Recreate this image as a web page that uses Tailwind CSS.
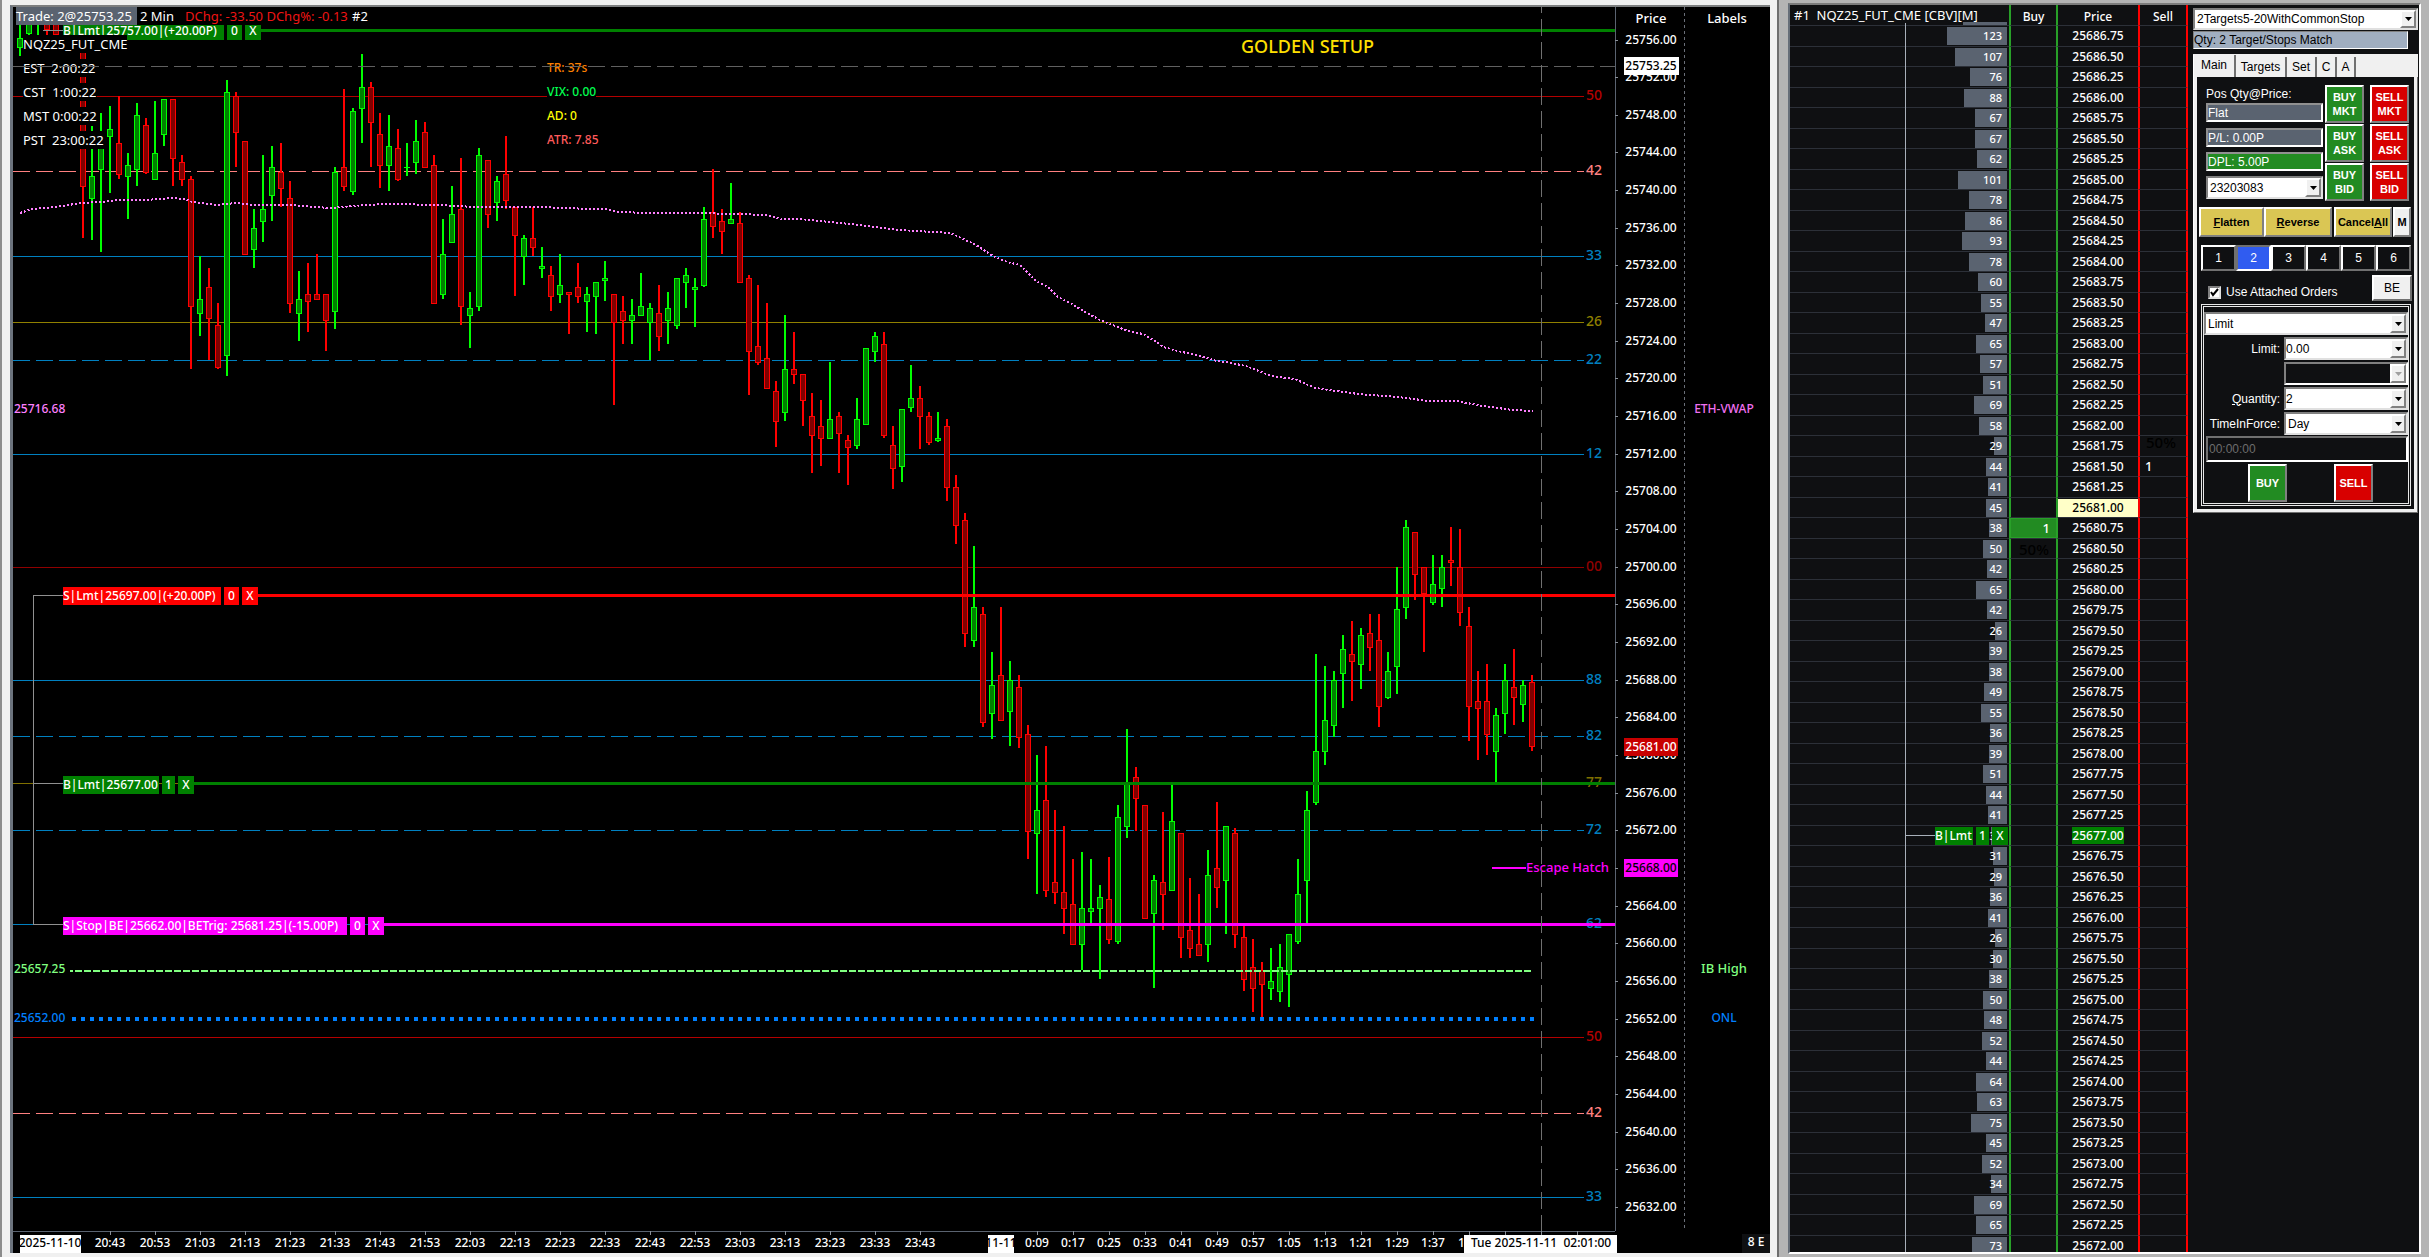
<!DOCTYPE html>
<html lang="en">
<head>
  <meta charset="UTF-8">
  <meta name="viewport" content="width=device-width, initial-scale=1">
  <title>NQZ25_FUT_CME - 2 Min</title>
  <script src="https://cdn.jsdelivr.net/npm/@tailwindcss/browser@4"></script>
</head>
<body class="flex h-screen overflow-hidden bg-[#f0f0f0] font-['Noto_Sans','Open_Sans',sans-serif] text-[13px] leading-[18px] text-white">

  <!-- Chart window -->
  <main class="flex min-w-0 flex-1 border-r-2 border-l-2 border-r-[#6e6e6e] border-l-[#8c8c8c] bg-[#f0f0f0] pt-[5px] pr-[7px] pb-1 pl-2">
    <div id="chart" class="relative min-w-0 flex-1 overflow-hidden border-t-2 border-l-3 border-t-[#7d7f80] border-l-[#6b737d] bg-black">
      <svg id="plot" class="absolute inset-0 h-full w-full font-medium"></svg>

      <!-- Working orders on the chart -->
      <div class="absolute top-[15px] left-[50px] flex gap-[3px] text-[12px] font-medium">
        <span class="w-[161px] bg-[#008000] whitespace-nowrap">B|Lmt|25757.00|(+20.00P)</span>
        <button class="w-[15px] bg-[#008000]">0</button>
        <button class="w-4 bg-[#008000]">X</button>
      </div>
      <div class="absolute top-[580px] left-[50px] flex gap-[3px] text-[12px] font-medium">
        <span class="w-[158px] bg-[#ff0000] whitespace-nowrap">S|Lmt|25697.00|(+20.00P)</span>
        <button class="w-[15px] bg-[#ff0000]">0</button>
        <button class="w-4 bg-[#ff0000]">X</button>
      </div>
      <div class="absolute top-[769px] left-[50px] flex gap-[3px] text-[12px] font-medium">
        <span class="w-24 bg-[#008000] whitespace-nowrap">B|Lmt|25677.00</span>
        <button class="w-[13px] bg-[#008000]">1</button>
        <button class="w-4 bg-[#008000]">X</button>
      </div>
      <div class="absolute top-[910px] left-[50px] flex gap-[3px] text-[12px] font-medium">
        <span class="w-[284px] bg-[#ff00ff] whitespace-nowrap">S|Stop|BE|25662.00|BETrig: 25681.25|(-15.00P)</span>
        <button class="w-[15px] bg-[#ff00ff]">0</button>
        <button class="w-4 bg-[#ff00ff]">X</button>
      </div>

      <!-- Header line -->
      <div class="absolute top-0 left-[3px] flex bg-black whitespace-nowrap">
        <span class="w-[121px] bg-[#5a6370]">Trade: 2@25753.25</span>
        <span class="ml-[3px] w-[45px]">2 Min</span>
        <span class="w-[167px] text-[#f01414]">DChg: -33.50 DChg%: -0.13</span>
        <span>#2</span>
      </div>

      <!-- Clocks -->
      <div class="absolute top-[28px] left-[10px] flex flex-col items-start gap-[6px] whitespace-pre">
        <span class="bg-black">NQZ25_FUT_CME</span>
        <span class="bg-black">EST  2:00:22</span>
        <span class="bg-black">CST  1:00:22</span>
        <span class="bg-black">MST 0:00:22</span>
        <span class="bg-black">PST  23:00:22</span>
      </div>
      <div class="absolute top-[52px] left-[534px] flex flex-col items-start gap-[6px] text-[12px] font-medium">
        <span class="bg-black text-[#ff8000]">TR: 37s</span>
        <span class="bg-black text-[#00ff50]">VIX: 0.00</span>
        <span class="bg-black text-[#ffff00]">AD: 0</span>
        <span class="bg-black text-[#ff5a5a]">ATR: 7.85</span>
      </div>
      <svg id="cross" class="pointer-events-none absolute inset-0 h-full w-full"></svg>
    </div>
  </main>

  <!-- Trading window: price ladder and order entry -->
  <aside class="flex w-[650px] shrink-0 bg-[#b4b4b4] pt-[3px] pr-2 pb-[3px] pl-[9px]">
    <div class="flex min-w-0 flex-1 overflow-hidden border-2 border-t-[#7c7c7c] border-r-white border-b-white border-l-[#666e78] bg-[#0f1012]">
      <div class="relative w-[398px] shrink-0 overflow-hidden">
        <table class="w-[398px] table-fixed border-separate border-spacing-0">
          <thead>
            <tr class="h-5 leading-[16px]">
              <th class="w-[219px] p-0 pl-1 text-left font-normal whitespace-pre">#1  NQZ25_FUT_CME [CBV][M]</th>
              <th class="w-[47px] border-l-2 border-[#28a028] p-0 pt-1 text-[12px] font-medium">Buy</th>
              <th class="w-[82px] border-l-2 border-[#28a028] p-0 pt-1 text-[12px] font-medium">Price</th>
              <th class="w-[50px] border-x-2 border-[#ff0000] p-0 pt-1 text-[12px] font-medium">Sell</th>
            </tr>
          </thead>
          <tbody id="ladder" class="text-[12px] leading-[18px] font-medium"></tbody>
        </table>
        <!-- Divider of the volume column -->
        <div class="absolute top-[18px] bottom-0 left-[115px] w-px bg-[#a8b0ba]"></div>
        <div class="absolute top-[17px] left-[173px] h-[3px] w-11 bg-[#5a6370]"></div>
      </div>

      <form class="ml-[5px] flex w-[225px] shrink-0 flex-col pt-[3px] font-['Liberation_Sans',Arial,sans-serif] text-[12px] leading-[14px]">
        <div class="relative h-[22px]">
          <select aria-label="Trade window config" class="h-full w-full appearance-none border-2 border-t-[#808080] border-r-[#e0e0e0] border-b-[#e0e0e0] border-l-[#808080] bg-white pl-[2px] text-black"><option>2Targets5-20WithCommonStop</option></select>
          <span class="pointer-events-none absolute inset-y-[2px] right-[2px] flex w-4 items-center justify-center border-2 border-t-white border-r-[#808080] border-b-[#808080] border-l-white bg-[#f0f0f0]"><svg class="h-1 w-[7px]" viewBox="0 0 7 4"><path d="M0 0h7L3.5 4z"/></svg></span>
        </div>
        <p class="mt-px h-[18px] w-[215px] border border-t-[#808080] border-r-white border-b-white border-l-[#808080] bg-[#a0aec0] pt-px text-black">Qty: 2 Target/Stops Match</p>

        <div class="mt-[5px] bg-[#f0f0f0]">
          <div class="flex h-[23px] items-end text-black">
            <button type="button" class="h-[22px] w-[43px] border-r-2 border-l border-r-[#707070] border-l-white bg-[#f0f0f0] pb-[2px]">Main</button>
            <button type="button" class="h-5 w-[51px] border-r-2 border-[#707070] bg-[#f0f0f0]">Targets</button>
            <button type="button" class="h-5 w-[30px] border-r-2 border-[#707070] bg-[#f0f0f0]">Set</button>
            <button type="button" class="h-5 w-5 border-r-2 border-[#707070] bg-[#f0f0f0]">C</button>
            <button type="button" class="h-5 w-[19px] border-r-2 border-[#707070] bg-[#f0f0f0]">A</button>
          </div>

          <div class="border border-t-0 border-r-[#707070] border-b-[#707070] border-l-white px-[3px] pb-[3px]">
            <div class="bg-[#0f1012] pb-[3px]">
              <div class="flex pt-2 pl-[9px]">
                <div class="flex w-[117px] flex-col">
                  <label for="pos" class="h-[18px] pt-[2px]">Pos Qty@Price:</label>
                  <input id="pos" value="Flat" readonly class="h-[19px] border-2 border-t-[#909090] border-r-white border-b-white border-l-[#909090] bg-[#5a6370]">
                  <input aria-label="P/L" value="P/L: 0.00P" readonly class="mt-[6px] h-[19px] border-2 border-t-[#909090] border-r-white border-b-white border-l-[#909090] bg-[#5a6370]">
                  <input aria-label="Daily P/L" value="DPL: 5.00P" readonly class="mt-[5px] h-[19px] border-2 border-t-[#909090] border-r-white border-b-white border-l-[#909090] bg-[#228b22]">
                  <div class="relative mt-[5px] h-[23px]">
                    <select aria-label="Trade account" class="h-full w-full appearance-none border-2 border-t-[#808080] border-r-[#e0e0e0] border-b-[#e0e0e0] border-l-[#808080] bg-white pl-[2px] text-black"><option>23203083</option></select>
                    <span class="pointer-events-none absolute inset-y-[2px] right-[2px] flex w-4 items-center justify-center border-2 border-t-white border-r-[#808080] border-b-[#808080] border-l-white bg-[#f0f0f0]"><svg class="h-1 w-[7px]" viewBox="0 0 7 4"><path d="M0 0h7L3.5 4z"/></svg></span>
                  </div>
                </div>
                <div class="ml-[2px] grid w-[39px] grid-rows-3 gap-px text-[11px] font-bold">
                  <button type="button" class="h-[38px] border-2 border-t-white border-r-[#808080] border-b-[#808080] border-l-white bg-[#228b22]">BUY<br>MKT</button>
                  <button type="button" class="h-[38px] border-2 border-t-white border-r-[#808080] border-b-[#808080] border-l-white bg-[#228b22]">BUY<br>ASK</button>
                  <button type="button" class="h-[38px] border-2 border-t-white border-r-[#808080] border-b-[#808080] border-l-white bg-[#228b22]">BUY<br>BID</button>
                </div>
                <div class="ml-[6px] grid w-[39px] grid-rows-3 gap-px text-[11px] font-bold">
                  <button type="button" class="h-[38px] border-2 border-t-white border-r-[#808080] border-b-[#808080] border-l-white bg-[#d80000]">SELL<br>MKT</button>
                  <button type="button" class="h-[38px] border-2 border-t-white border-r-[#808080] border-b-[#808080] border-l-white bg-[#d80000]">SELL<br>ASK</button>
                  <button type="button" class="h-[38px] border-2 border-t-white border-r-[#808080] border-b-[#808080] border-l-white bg-[#d80000]">SELL<br>BID</button>
                </div>
              </div>

              <div class="mt-[6px] flex h-[30px] pl-[2px] text-[11px] font-bold text-black">
                <button type="button" class="w-[65px] border-2 border-t-white border-r-[#808080] border-b-[#808080] border-l-white bg-[#dac654]"><u>F</u>latten</button>
                <button type="button" class="w-[68px] border-2 border-t-white border-r-[#808080] border-b-[#808080] border-l-white bg-[#dac654]"><u>R</u>everse</button>
                <button type="button" class="ml-[2px] w-[58px] border-2 border-t-white border-r-[#808080] border-b-[#808080] border-l-white bg-[#dac654]">Cancel<u>A</u>ll</button>
                <button type="button" class="ml-px w-[18px] border-2 border-t-white border-r-[#808080] border-b-[#808080] border-l-white bg-[#f0f0f0]">M</button>
              </div>

              <div class="mt-2 ml-1 grid h-[26px] w-[210px] grid-cols-6">
                <button type="button" class="border-2 border-t-white border-r-[#707070] border-b-[#707070] border-l-white">1</button>
                <button type="button" class="border-2 border-t-[#707070] border-r-white border-b-white border-l-[#707070] bg-[#305cf0]">2</button>
                <button type="button" class="border-2 border-t-white border-r-[#707070] border-b-[#707070] border-l-white">3</button>
                <button type="button" class="border-2 border-t-white border-r-[#707070] border-b-[#707070] border-l-white">4</button>
                <button type="button" class="border-2 border-t-white border-r-[#707070] border-b-[#707070] border-l-white">5</button>
                <button type="button" class="border-2 border-t-white border-r-[#707070] border-b-[#707070] border-l-white">6</button>
              </div>

              <div class="mt-1 flex h-[26px] items-center pr-[2px] pl-[11px]">
                <input id="attached" type="checkbox" checked class="mt-2 h-[13px] w-[13px] appearance-none border-2 border-t-[#808080] border-r-[#e0e0e0] border-b-[#e0e0e0] border-l-[#808080] bg-white">
                <svg class="pointer-events-none mt-2 -ml-[11px] h-[9px] w-[9px] fill-none stroke-black stroke-2" viewBox="0 0 9 9"><path d="M1 4l2 3 5-6"/></svg>
                <label for="attached" class="mt-2 ml-[7px]">Use Attached Orders</label>
                <button type="button" class="ml-auto h-[26px] w-10 border-2 border-t-white border-r-[#707070] border-b-[#707070] border-l-white bg-[#f0f0f0] text-black">BE</button>
              </div>

              <!-- Order entry -->
              <fieldset class="mt-[3px] ml-1 w-[210px] border-3 border-double border-[#e8e8e8] pb-px">
                <div class="relative mt-[5px] h-[23px] w-[204px]">
                  <select aria-label="Order type" class="h-full w-full appearance-none border-2 border-t-[#808080] border-r-[#e0e0e0] border-b-[#e0e0e0] border-l-[#808080] bg-white pl-[2px] text-black"><option>Limit</option></select>
                  <span class="pointer-events-none absolute inset-y-[2px] right-[2px] flex w-4 items-center justify-center border-2 border-t-white border-r-[#808080] border-b-[#808080] border-l-white bg-[#f0f0f0]"><svg class="h-1 w-[7px]" viewBox="0 0 7 4"><path d="M0 0h7L3.5 4z"/></svg></span>
                </div>
                <div class="mt-[2px] grid w-[204px] grid-cols-[76px_1fr] items-center gap-x-1 gap-y-[2px]">
                  <label for="price1" class="text-right">Limit:</label>
                  <div class="relative h-[23px]">
                    <select id="price1" class="h-full w-full appearance-none border-2 border-t-[#808080] border-r-[#e0e0e0] border-b-[#e0e0e0] border-l-[#808080] bg-white text-black"><option>0.00</option></select>
                    <span class="pointer-events-none absolute inset-y-[2px] right-[2px] flex w-4 items-center justify-center border-2 border-t-white border-r-[#808080] border-b-[#808080] border-l-white bg-[#f0f0f0]"><svg class="h-1 w-[7px]" viewBox="0 0 7 4"><path d="M0 0h7L3.5 4z"/></svg></span>
                  </div>
                  <span></span>
                  <div class="relative h-[23px]">
                    <select aria-label="Price 2" disabled class="h-full w-full appearance-none border-2 border-t-[#808080] border-r-white border-b-white border-l-[#808080] bg-[#0f1012]"><option></option></select>
                    <span class="pointer-events-none absolute inset-y-[2px] right-[2px] flex w-4 items-center justify-center border-2 border-t-white border-r-[#808080] border-b-[#808080] border-l-white bg-[#f0f0f0]"><svg class="h-1 w-[7px] fill-[#a0a0a0]" viewBox="0 0 7 4"><path d="M0 0h7L3.5 4z"/></svg></span>
                  </div>
                  <label for="qty" class="text-right"><u>Q</u>uantity:</label>
                  <div class="relative h-[23px]">
                    <select id="qty" class="h-full w-full appearance-none border-2 border-t-[#808080] border-r-[#e0e0e0] border-b-[#e0e0e0] border-l-[#808080] bg-white text-black"><option>2</option></select>
                    <span class="pointer-events-none absolute inset-y-[2px] right-[2px] flex w-4 items-center justify-center border-2 border-t-white border-r-[#808080] border-b-[#808080] border-l-white bg-[#f0f0f0]"><svg class="h-1 w-[7px]" viewBox="0 0 7 4"><path d="M0 0h7L3.5 4z"/></svg></span>
                  </div>
                  <label for="tif" class="text-right">TimeInForce:</label>
                  <div class="relative h-[23px]">
                    <select id="tif" class="h-full w-full appearance-none border-2 border-t-[#808080] border-r-[#e0e0e0] border-b-[#e0e0e0] border-l-[#808080] bg-white pl-[2px] text-black"><option>Day</option></select>
                    <span class="pointer-events-none absolute inset-y-[2px] right-[2px] flex w-4 items-center justify-center border-2 border-t-white border-r-[#808080] border-b-[#808080] border-l-white bg-[#f0f0f0]"><svg class="h-1 w-[7px]" viewBox="0 0 7 4"><path d="M0 0h7L3.5 4z"/></svg></span>
                  </div>
                </div>
                <input aria-label="Good till time" value="00:00:00" disabled class="mt-px ml-[2px] h-[26px] w-[202px] border-2 border-t-[#707070] border-r-white border-b-white border-l-[#707070] bg-[#0f1012] px-px text-[#6d6d6d]">
                <div class="mt-[2px] flex h-[38px] gap-[47px] pl-11 text-[11px] font-bold">
                  <button type="button" class="w-[39px] border-2 border-t-white border-r-[#808080] border-b-[#808080] border-l-white bg-[#228b22]">BUY</button>
                  <button type="button" class="w-[39px] border-2 border-t-white border-r-[#808080] border-b-[#808080] border-l-white bg-[#d80000]">SELL</button>
                </div>
              </fieldset>
            </div>
          </div>
        </div>
      </form>
    </div>
  </aside>

  <script>
    const chart = document.getElementById('chart');
    const plot = document.getElementById('plot');
    const cross = document.getElementById('cross');

    // Bars oldest to newest: direction, high, body top, body bottom, low (thirds of a pixel from the window top)
    const bars = `g 60 115 143 167,g 60 60 101 104,g 60 60 66 108,r 60 60 91 104,r 60 60 106 106,,,r 100 110 560 713,
g 378 529 596 719,g 339 402 509 755,g 318 388 410 578,r 288 430 524 537,g 459 495 530 657,g 309 345 509 557,
r 354 376 518 521,g 303 459 540 540,g 297 297 404 437,r 297 297 476 557,r 465 486 540 557,r 528 537 920 1107,
g 768 897 942 1007,r 804 861 957 1080,r 909 975 1104 1107,g 240 276 1068 1128,r 276 288 399 501,r 423 423 765 765,
g 627 684 749 803,g 465 627 665 726,g 438 501 588 663,r 429 516 567 621,r 543 594 912 939,g 813 897 942 1022,
r 789 882 906 996,r 762 882 900 900,r 882 882 963 1053,g 501 516 936 987,r 267 501 561 573,g 324 333 576 585,
g 162 261 327 429,r 246 261 369 501,r 339 402 497 564,g 345 438 497 573,r 387 444 540 543,g 429 501 504 528,
g 360 423 489 521,r 366 396 504 504,r 465 495 912 912,g 657 762 885 896,g 558 642 729 729,r 474 627 921 975,
g 876 924 948 1044,g 444 465 921 933,r 480 480 645 684,g 528 543 609 663,r 408 522 603 627,r 621 621 708 888,
g 705 714 770 855,r 621 714 744 768,g 741 798 807 834,r 798 825 891 933,g 762 855 885 909,r 876 876 885 1002,
r 789 861 891 909,g 861 882 906 996,g 846 846 891 1002,g 783 834 843 903,r 882 882 969 1215,r 888 933 963 1032,
g 897 945 963 1032,g 819 918 948 948,g 909 924 969 1080,r 855 939 1011 1053,g 876 924 963 1032,g 834 834 978 987,
g 804 825 849 924,g 834 861 870 981,g 621 657 858 861,r 507 636 681 714,r 627 663 696 762,g 549 657 672 672,
r 636 669 849 849,r 825 834 1056 1185,r 855 1038 1089 1095,r 909 1074 1167 1167,r 1143 1173 1266 1341,g 945 1107 1239 1263,
r 996 1107 1125 1152,r 1122 1122 1203 1278,r 1179 1248 1308 1419,r 1200 1278 1317 1398,g 1086 1257 1317 1317,r 1236 1248 1302 1419,
r 1305 1320 1344 1455,g 1194 1257 1338 1347,g 1044 1044 1275 1275,g 996 1008 1056 1086,r 996 1032 1308 1314,r 1278 1335 1407 1467,
g 1227 1227 1401 1446,g 1095 1194 1224 1236,r 1158 1194 1251 1347,r 1236 1248 1329 1335,g 1236 1314 1323 1326,r 1257 1278 1464 1503,
r 1425 1461 1578 1632,r 1539 1560 1902 1941,g 1638 1821 1923 1941,r 1821 1842 2169 2181,g 1956 2055 2142 2217,r 1821 2025 2163 2163,
g 1983 2040 2136 2238,r 2025 2061 2214 2244,r 2175 2202 2496 2577,g 2265 2430 2502 2682,r 2238 2400 2673 2691,r 2430 2646 2679 2712,
r 2478 2676 2727 2802,r 2577 2712 2835 2835,g 2556 2724 2835 2910,g 2577 2724 2736 2775,g 2655 2691 2727 2937,r 2571 2697 2820 2832,
g 2415 2451 2826 2832,g 2187 2352 2481 2514,r 2301 2331 2397 2493,r 2415 2415 2757 2757,g 2625 2640 2742 2964,r 2436 2646 2685 2790,
g 2355 2463 2673 2673,r 2499 2499 2814 2874,r 2634 2790 2847 2874,r 2682 2832 2868 2868,g 2550 2625 2835 2886,r 2406 2604 2664 2724,
g 2478 2478 2643 2802,r 2484 2499 2805 2844,r 2778 2811 2940 2973,r 2817 2901 2967 3036,r 2886 2910 2955 3054,g 2844 2943 2967 3000,
g 2832 2901 2976 3006,g 2802 2802 2925 3021,g 2577 2682 2826 2832,g 2373 2430 2643 2775,g 1962 2253 2409 2415,g 1998 2160 2256 2295,
g 2013 2040 2178 2211,g 1905 1947 2022 2124,r 1863 1962 1986 2103,g 1884 1905 1995 2067,r 1842 1899 1944 2013,r 1842 1920 2121 2181,
g 1956 2013 2094 2097,g 1701 1827 2001 2082,g 1560 1581 1824 1857,r 1596 1596 1725 1800,r 1701 1701 1782 1956,g 1665 1752 1809 1815,
g 1665 1701 1767 1821,r 1581 1680 1689 1758,r 1587 1701 1839 1878,r 1821 1878 2121 2223,r 2013 2103 2127 2280,r 1992 2103 2205 2265,
g 2124 2145 2256 2352,g 1992 2040 2142 2202,r 1947 2061 2094 2175,g 2040 2055 2115 2166,r 2025 2046 2241 2253`.replace(/\n/g, '').split(',');

    // VWAP points in window pixels
    const vwap = [[20,213],[32,209],[47,208],[63,206],[80,203],[100,202],[120,200],[145,200],[172,198],[185,199],[192,202],[218,205],[235,203],[255,205],[290,205],[330,208],[365,205],[390,204],[440,205],[475,207],[540,207],[590,209],[605,209],[617,212],[650,213],[690,213],[740,214],[765,215],[782,219],[800,219],[850,224],[875,227],[900,230],[950,233],[957,236],[976,245],[993,256],[1007,262],[1020,265],[1030,275],[1036,281],[1048,287],[1058,297],[1072,304],[1085,312],[1100,320],[1115,326],[1128,331],[1143,334],[1155,341],[1163,347],[1178,351],[1200,356],[1217,361],[1232,363],[1249,367],[1271,376],[1295,379],[1315,388],[1358,394],[1398,397],[1429,401],[1457,401],[1477,405],[1512,410],[1533,411]];

    // Price levels: price, colour, dashed
    const levels = [[25750,'#b40000'],[25742,'#ff8080',1],[25733,'#0080c0'],[25726,'#908000'],[25722,'#0080c0',1],[25712,'#0080c0'],[25700,'#900000'],[25688,'#0080c0'],[25682,'#0080c0',1],[25677,'#807000'],[25672,'#0080c0',1],[25662,'#0080c0'],[25650,'#b40000'],[25642,'#ff8080',1],[25633,'#0080c0']];
    const orders = [[25757,'#008000',248],[25697,'#ff0000',245],[25677,'#008000',181],[25662,'#ff00ff',371]];

    const yOf = price => Math.floor(33 + (25756 - price) * 9.414);
    const rect = (x, y, w, h, fill) => `<rect x="${x}" y="${y}" width="${w}" height="${h}" fill="${fill}"/>`;
    const hline = (x1, x2, y, color, dash) => `<line x1="${x1}" x2="${x2}" y1="${y + 0.5}" y2="${y + 0.5}" stroke="${color}"${dash ? ` stroke-dasharray="${dash}"` : ''}/>`;
    const vline = (x, y1, y2, color, dash, off) => `<line x1="${x + 0.5}" x2="${x + 0.5}" y1="${y1}" y2="${y2}" stroke="${color}"${dash ? ` stroke-dasharray="${dash}" stroke-dashoffset="${off || 0}"` : ''}/>`;
    // Text is centred on y
    const text = (x, y, s, fill, size, anchor) => `<text x="${x}" y="${y + 5}" fill="${fill}" font-size="${size || 12}" text-anchor="${anchor || 'start'}" xml:space="preserve">${s}</text>`;
    const clock = m => Math.floor(m / 60) + ':' + String(m % 60).padStart(2, '0');

    function draw() {
      const full = chart.clientWidth;
      const W = full - 155;               // plot area
      const H = chart.clientHeight - 22;  // time axis below
      const dx = W - 1615;                // bars stay anchored to the price axis
      let s = '<g shape-rendering="crispEdges">';

      for (const [p, c, dashed] of levels) s += hline(0, W - 31, yOf(p), c, dashed ? '17 6' : '');

      bars.forEach((row, i) => {
        if (!row) return;
        const [dir, ...v] = row.split(' ');
        const [h, bt, bb, l] = v.map(n => Math.round(n / 3) - 7);
        const x = 20 + 9 * i + dx;
        const edge = dir === 'g' ? '#00ff00' : '#ff0000';
        s += rect(x - 1, h, 2, l - h, edge);
        s += rect(x - 3, bt, 6, Math.max(bb - bt, 1), edge);
        if (bb - bt > 2) s += rect(x - 2, bt + 1, 4, bb - bt - 2, dir === 'g' ? '#008000' : '#800000');
      });

      // IB high and overnight low
      s += `<line x1="57" x2="${W - 82}" y1="964" y2="964" stroke="#80ff80" stroke-width="2" stroke-dasharray="7 2" stroke-dashoffset="4"/>`;
      s += `<line x1="59" x2="${W - 80}" y1="1012" y2="1012" stroke="#0080ff" stroke-width="4" stroke-dasharray="4 5"/>`;
      s += `<polyline fill="none" stroke="#ff80ff" stroke-width="2" stroke-dasharray="2 2" points="${vwap.map(([x, y]) => (x + dx) + ',' + (y - 7)).join(' ')}"/>`;
      s += '</g>';

      for (const [p, c] of levels) s += text(W - 29, yOf(p) - 1, String(p).slice(-2), c, 14);

      // Orders and the bracket that ties them together
      s += '<g shape-rendering="crispEdges">';
      for (const [p, c, x] of orders) s += rect(x, yOf(p) - 1, W - x, 3, c);
      s += hline(30, 50, yOf(25757), '#909090');
      for (const p of [25697, 25677, 25662]) s += hline(20, 50, yOf(p), '#909090');
      s += vline(20, yOf(25697), yOf(25662), '#909090');
      s += rect(W - 123, 860, 34, 2, '#ff00ff');

      // Axes
      s += vline(W, 0, H, '#5a6370');
      s += vline(W + 69, 0, H, '#6a6f78', '3 3');
      s += hline(0, W, H, '#5a6370');
      for (let p = 25756; p >= 25632; p -= 4) s += hline(W, W + 3, yOf(p), '#8a9099');
      s += '</g>';

      s += text(W - 89, 860, 'Escape Hatch', '#ff00ff', 13);
      s += text(W - 374, 41, 'GOLDEN SETUP', '#ffe000', 18);
      s += text(1, 401, '25716.68', '#ff80ff') + text(1, 961, '25657.25', '#80ff80') + text(1, 1010, '25652.00', '#0080ff');

      s += text(W + 36, 11, 'Price', '#fff', 13, 'middle') + text(W + 112, 11, 'Labels', '#fff', 13, 'middle');
      for (let p = 25756; p >= 25632; p -= 4) {
        if (p !== 25668) s += text(W + 36, yOf(p) - 1, p + '.00', '#fff', 12, 'middle');
      }
      s += rect(W + 9, 50, 55, 18, '#fff') + text(W + 36, 58, '25753.25', '#000', 12, 'middle');
      s += rect(W + 9, 731, 54, 18, '#c80000') + text(W + 36, 739, '25681.00', '#fff', 12, 'middle');
      s += rect(W + 9, 852, 54, 18, '#ff00ff') + text(W + 36, 860, '25668.00', '#000', 12, 'middle');
      s += text(W + 109, 401, 'ETH-VWAP', '#f070f0', 12, 'middle') + text(W + 109, 961, 'IB High', '#80ff80', 13, 'middle') + text(W + 109, 1010, 'ONL', '#0080ff', 12, 'middle');

      // Time axis
      const ty = H + 11;
      for (let k = 0; k <= 18; k++) {
        const x = 97 + 45 * k + W - 1602;
        s += rect(x, H, 1, 4, '#8a9099') + text(x, ty, clock(1243 + k * 10), '#fff', 12, 'middle');
      }
      for (let k = 0; k <= 15; k++) {
        const x = 1024 + 36 * k + W - 1602;
        s += rect(x, H, 1, 4, '#8a9099');
        if (k <= 11) s += text(x, ty, clock(9 + k * 8), '#fff', 12, 'middle');
      }
      s += text(W - 157, ty, '1', '#fff');
      s += rect(7, H + 4, 61, 18, '#fff') + text(37, ty, '2025-11-10', '#000', 12, 'middle');
      s += rect(W - 627, H + 4, 26, 18, '#fff') + text(W - 614, ty, '11-11', '#000', 12, 'middle');
      s += rect(W - 151, H + 4, 153, 18, '#fff') + text(W - 74, ty, 'Tue 2025-11-11  02:01:00', '#000', 12, 'middle');
      s += rect(full - 28, H + 3, 28, 19, '#0f1012') + text(full - 14, H + 10, '8 E', '#fff', 12, 'middle');
      plot.innerHTML = s;

      cross.innerHTML = '<g shape-rendering="crispEdges">' + hline(0, W, 59, '#606060', '17 6') + vline(W - 74, 0, H, '#707070', '17 6', 11) + '</g>';
    }
    // Fires once at the start and again whenever the chart changes size
    new ResizeObserver(draw).observe(chart);

    // Price ladder
    const volumes = [123,107,76,88,67,67,62,101,78,86,93,78,60,55,47,65,57,51,69,58,29,44,41,45,38,50,42,65,42,26,39,38,49,55,36,39,51,44,41,34,31,29,36,41,26,30,38,50,48,52,44,64,63,75,45,52,34,69,65,73];
    document.getElementById('ladder').innerHTML = volumes.map((v, i) => {
      const price = (25686.75 - i * 0.25).toFixed(2);
      let priceClass = '', order = '', buy = '', sell = '';
      if (price === '25681.00') priceClass = 'block bg-[#ffffc8] text-black';
      if (price === '25677.00') {
        priceClass = 'bg-[#008000]';
        order = `<div class="absolute top-0 left-[115px] flex items-center gap-[3px]">
          <i class="-mr-[3px] h-px w-[30px] bg-[#a8b0ba]"></i>
          <span class="w-[38px] bg-[#008000]">B|Lmt</span>
          <button class="w-[13px] bg-[#008000]">1</button>
          <button class="w-4 bg-[#008000]">X</button>
        </div>`;
      }
      if (price === '25680.75') buy = '<span class="block border-y border-[#28a028] bg-[#228b22] pr-[6px] text-right text-[13px] leading-[18px]">1</span>';
      if (price === '25680.50') buy = '<span class="block pl-2 text-[15px] leading-[18px] text-black">50%</span>';
      if (price === '25681.50') sell = '<span class="pl-[5px] text-[13px]">1</span>';
      if (price === '25681.75') sell = '<span class="block -translate-y-1 pl-[6px] text-[15px] leading-[18px] text-black">50%</span>';
      return `<tr class="${i % 2 ? 'h-5' : 'h-[21px]'}">
        <td class="border-t border-[#2c3038] p-0"><div class="relative flex h-[18px] justify-end pr-[2px]">
          <div class="h-full bg-[#5a6370]" style="width:${Math.round(v / 2 - 1.5)}px"></div>
          <span class="absolute top-0 right-[7px] text-[11px]">${v}</span>${order}
        </div></td>
        <td class="border-t border-l-2 border-t-[#2c3038] border-l-[#28a028] p-0">${buy}</td>
        <td class="border-t border-l-2 border-t-[#2c3038] border-l-[#28a028] p-0 text-center"><span class="${priceClass}">${price}</span></td>
        <td class="border-t border-x-2 border-t-[#2c3038] border-x-[#ff0000] p-0">${sell}</td>
      </tr>`;
    }).join('');
  </script>
</body>
</html>
